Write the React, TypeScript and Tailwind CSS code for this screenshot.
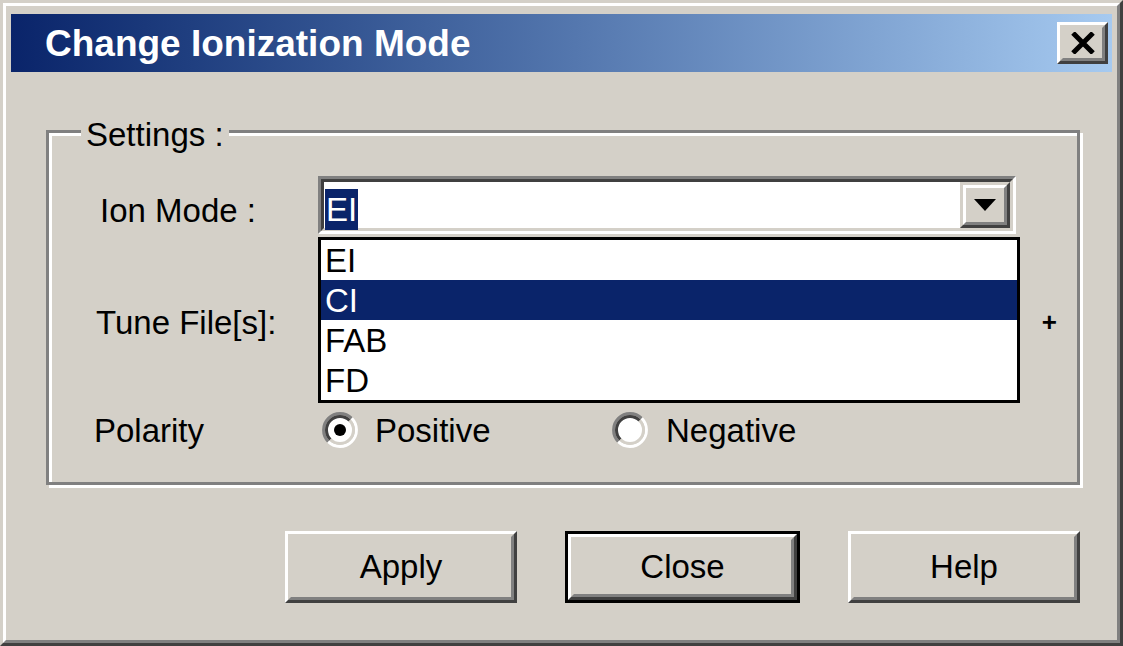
import React from 'react';

const FONT = "font-['Liberation_Sans',Arial,sans-serif]";

function Radio({ checked }: { checked?: boolean }) {
  return (
    <svg width="36" height="36" viewBox="0 0 36 36" className="shrink-0">
      <circle cx="18" cy="18" r="13" fill="#fff" />
      <path d="M6.333 29.667 A16.5 16.5 0 0 1 29.667 6.333" stroke="#808080" strokeWidth="3" fill="none" />
      <path d="M29.667 6.333 A16.5 16.5 0 0 1 6.333 29.667" stroke="#fff" strokeWidth="3" fill="none" />
      <path d="M8.454 27.546 A13.5 13.5 0 0 1 27.546 8.454" stroke="#404040" strokeWidth="3" fill="none" />
      <path d="M27.546 8.454 A13.5 13.5 0 0 1 8.454 27.546" stroke="#d4d0c8" strokeWidth="3" fill="none" />
      {checked && <circle cx="18" cy="18" r="6" fill="#000" />}
    </svg>
  );
}

function Button({ label, isDefault }: { label: string; isDefault?: boolean }) {
  const raised = (
    <div className="h-full border-[3px] border-t-white border-l-white border-b-[#404040] border-r-[#404040]">
      <div className="h-full flex items-center justify-center border-[3px] border-t-[#d4d0c8] border-l-[#d4d0c8] border-b-[#808080] border-r-[#808080] text-[33px] text-black">
        {label}
      </div>
    </div>
  );
  if (isDefault) {
    return <div className="w-[235px] h-[72px] border-[3px] border-black">{raised}</div>;
  }
  return <div className="w-[232px] h-[72px]">{raised}</div>;
}

const ITEMS = ['EI', 'CI', 'FAB', 'FD'];

export default function App() {
  return (
    <div className={`w-[1123px] h-[646px] bg-[#d4d0c8] ${FONT}`}>
      <div className="w-full h-full border-[3px] border-t-[#d4d0c8] border-l-[#d4d0c8] border-b-[#404040] border-r-[#404040]">
        <div className="w-full h-full border-[3px] border-t-white border-l-white border-b-[#808080] border-r-[#808080] pt-[8px] px-[5px] flex flex-col">
          {/* title bar */}
          <div className="h-[58px] shrink-0 flex items-center bg-linear-to-r from-[#0a246a] to-[#a6caf0]">
            <span className="pl-[34px] text-white font-bold text-[37px] leading-none">Change Ionization Mode</span>
            <div className="ml-auto mr-[4px] w-[51px] h-[42px] border-[3px] border-t-white border-l-white border-b-[#404040] border-r-[#404040]">
              <div className="w-full h-full bg-[#d4d0c8] border-[3px] border-t-[#d4d0c8] border-l-[#d4d0c8] border-b-[#808080] border-r-[#808080] flex items-center justify-center">
                <svg width="24" height="22" viewBox="0 0 24 22">
                  <path d="M2 1 L22 21 M22 1 L2 21" stroke="#000" strokeWidth="5" />
                </svg>
              </div>
            </div>
          </div>

          {/* settings group */}
          <div className="relative mt-[58px] ml-[35px] w-[1034px] h-[355px] border-[3px] border-[#808080] shadow-[3px_3px_0_#fff,inset_3px_3px_0_#fff] text-[33px] text-black">
            <span className="absolute -top-[15px] left-[32px] px-[5px] bg-[#d4d0c8] leading-[33px]">Settings :</span>

            <div className="mt-[43px] h-[58px] flex items-center">
              <div className="w-[269px] pl-[51px] pt-[10px] leading-none">Ion Mode :</div>
              <div className="relative w-[698px] h-[58px]">
                <div className="h-full border-[3px] border-t-[#808080] border-l-[#808080] border-b-white border-r-white">
                  <div className="h-full bg-white flex border-[3px] border-t-[#404040] border-l-[#404040] border-b-[#d4d0c8] border-r-[#d4d0c8]">
                    <div className="flex-1 pt-[3px] pl-[1px]">
                      <span className="inline-flex items-center h-[41px] px-[1px] bg-[#0a246a] text-white leading-none">EI</span>
                    </div>
                    <div className="w-[50px] h-full border-[3px] border-t-[#d4d0c8] border-l-[#d4d0c8] border-b-[#404040] border-r-[#404040]">
                      <div className="w-full h-full bg-[#d4d0c8] border-[3px] border-t-white border-l-white border-b-[#808080] border-r-[#808080] flex items-center justify-center">
                        <svg width="22" height="12" viewBox="0 0 22 12">
                          <path d="M0 0 H22 L11 12 Z" fill="#000" />
                        </svg>
                      </div>
                    </div>
                  </div>
                </div>

                {/* open drop-down list */}
                <div className="absolute left-0 top-[61px] w-[702px] border-[3px] border-black bg-white z-10">
                  {ITEMS.map((item) => (
                    <div
                      key={item}
                      className={`h-[40px] flex items-center pl-[4px] leading-none ${item === 'CI' ? 'bg-[#0a246a] text-white' : 'text-black'}`}
                    >
                      {item}
                    </div>
                  ))}
                </div>
              </div>
            </div>

            <div className="h-[176px] flex items-center">
              <div className="pl-[47px] leading-none">Tune File[s]:</div>
              <div className="ml-auto mr-[20px] text-[26px] font-bold leading-none">+</div>
            </div>

            <div className="h-[40px] flex items-center">
              <div className="w-[269px] pl-[45px] leading-none">Polarity</div>
              <div className="w-[294px] flex items-center pl-[4px] gap-[17px]">
                <Radio checked />
                <span className="leading-none">Positive</span>
              </div>
              <div className="flex items-center gap-[18px]">
                <Radio />
                <span className="leading-none">Negative</span>
              </div>
            </div>
          </div>

          {/* buttons */}
          <div className="mt-[46px] flex justify-end gap-[48px] pr-[32px]">
            <Button label="Apply" />
            <Button label="Close" isDefault />
            <Button label="Help" />
          </div>
        </div>
      </div>
    </div>
  );
}
